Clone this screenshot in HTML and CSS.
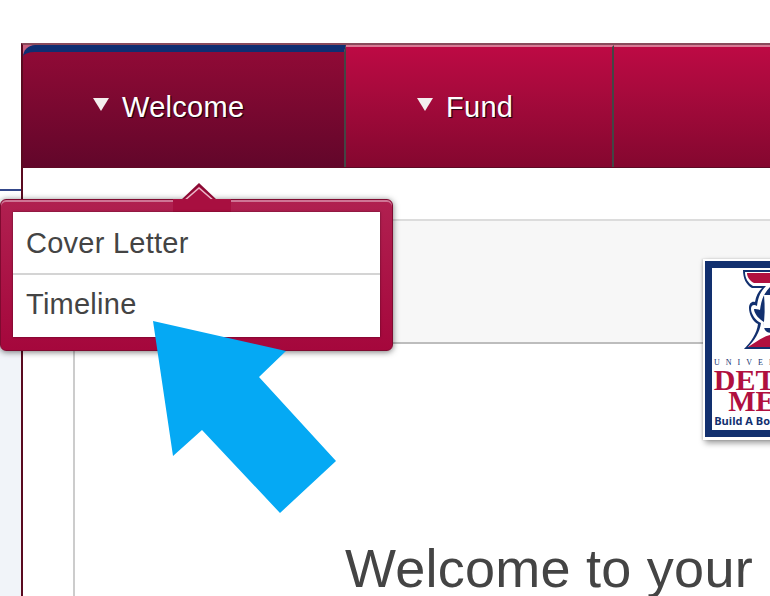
FILE: index.html
```html
<!DOCTYPE html>
<html lang="en">
<head>
  <meta charset="UTF-8" />
  <title>Welcome</title>
  <link rel="stylesheet" href="styles.css">
</head>
<body>

<div class="page">
  <div class="side"></div>

  <div class="frame">
    <nav class="tabs">
      <a class="tab active" style="width: 323px"><span class="caret"></span>Welcome</a>
      <a class="tab" style="width: 268px"><span class="caret"></span>Fund</a>
      <a class="tab tab-last"></a>
    </nav>

    <div class="content">
      <div class="panel">
        <div class="band"></div>
        <h1 class="title">Welcome to your account</h1>
      </div>
    </div>
  </div>
</div>

<div class="menu">
  <svg class="menu-notch" width="60" height="30" viewBox="0 0 60 30">
    <polygon points="9,17 27,0 45,17" fill="#8a0a33"/>
    <polygon points="11,17 27,3 43,17" fill="#a80f40"/>
    <polyline points="12,18 27,5 42,18" fill="none" stroke="#eab9c9" stroke-width="1.5"/>
    <rect x="1" y="16" width="58" height="13" fill="#a80f40"/>
  </svg>
  <ul class="menu-list">
    <li>Cover Letter</li>
    <li>Timeline</li>
  </ul>
</div>

<div class="logo">
  <div class="logo-inner">
    <svg class="logo-d" width="120" height="82" viewBox="0 0 120 82">
      <g transform="translate(-32 -2)">
        <path d="M33 2H150V81H34C41 74 47 65 48 56C43 54 39 46 39 40C39 35 42 33 45 34C46 28 48 24 52 20H42C36 17 33 10 33 2Z" fill="#12306f"/>
        <path d="M35 4H150V79H38C44 73 50 64 51 55C46 53 41 46 41 41C41 37 44 36 47 38C48 30 50 24 56 18H43C38 15 35 10 35 4Z" fill="#fff"/>
        <path d="M37 5H150V15H44C40 13 37 9 37 5Z" fill="#b0103f"/>
        <path d="M60 19H150V65H62C56 65 53 62 54 54C50 52 44 46 44 41C46 41 48 41 50 42C51 34 53 26 60 19Z" fill="#12306f"/>
        <path d="M54 27H70V60H53C55 50 55 38 54 27Z" fill="#fff"/>
        <path d="M38 79C46 74 52 69 60 67H150V79Z" fill="#b0103f"/>
      </g>
    </svg>
    <div class="logo-uni">UNIVERSITY OF</div>
    <div class="logo-name">DETROIT</div>
    <div class="logo-name logo-name-2">MERCY</div>
    <div class="logo-tag">Build A Boundless Future</div>
  </div>
</div>

<svg class="pointer" width="340" height="200" viewBox="0 0 340 200">
  <polygon points="153,1 286,31 259,57 336,141 280,193 202,110 173,136" fill="#05a9f4"/>
</svg>

</body>
</html>
```

FILE: styles.css
```css
html, body {
  margin: 0;
  height: 596px;
  overflow: hidden;
  background: #fff;
  font-family: "Liberation Sans", Arial, sans-serif;
}

.page {
  display: flex;
  height: 596px;
}

.side {
  width: 21px;
  flex: none;
  margin-top: 189px;
  border-top: 2px solid #34478a;
  background: linear-gradient(#fff, #f1f4f9 30%);
}

.frame {
  flex: 1;
  min-width: 0;
  margin-top: 43px;
  border-top: 2px solid #8a4a5c;
  border-left: 2px solid #5a0a20;
}

/* tabs */
.tabs {
  display: flex;
  height: 123px;
  box-sizing: border-box;
  border-bottom: 1px solid #5e0a25;
  background: #c96080;
}

.tab {
  display: flex;
  align-items: center;
  box-sizing: border-box;
  padding-left: 71px;
  border-top: 2px solid #d87a96;
  border-right: 2px solid #444;
  background: linear-gradient(#bd0a44, #a90a3d 35%, #84072f);
  color: #fff;
  font-size: 29px;
  letter-spacing: 0.3px;
  text-shadow: 1px 1px 1px #2a0210, 1px 1px 0 #2a0210;
}

.tab.active {
  padding-left: 70px;
  padding-bottom: 5px;
  border-top: 7px solid #0f2e72;
  border-top-left-radius: 12px;
  background: linear-gradient(#900a36, #62062a);
}

.tab-last {
  flex: 1;
  border-right: 0;
}

.caret {
  width: 0;
  height: 0;
  margin: 0 13px 6px 0;
  border-left: 8px solid transparent;
  border-right: 8px solid transparent;
  border-top: 13px solid #f4eeee;
}

/* page body */
.content {
  padding: 51px 0 0 50px;
}

.panel {
  border-left: 2px solid #ccc;
}

.band {
  height: 121px;
  border-top: 2px solid #dcdcdc;
  border-bottom: 2px solid #bdbdbd;
  background: #f7f7f7;
}

.title {
  margin: 194px 0 0 270px;
  color: #444;
  font-size: 54px;
  font-weight: normal;
  letter-spacing: 0.25px;
  line-height: 60px;
  white-space: nowrap;
}

/* popup under the Welcome tab */
.menu {
  position: absolute;
  left: 0;
  top: 199px;
  width: 367px;
  padding: 12px 12px 13px;
  border: 1px solid #7f0a30;
  border-radius: 6px;
  background: linear-gradient(#b02050, #a5073c);
  box-shadow: inset 0 2px 0 #cf7595, 0 1px 6px rgba(0, 0, 0, 0.55);
}

.menu-notch {
  position: absolute;
  left: 171px;
  top: -17px;
}

.menu-list {
  position: relative;
  margin: 0;
  padding: 0;
  list-style: none;
  background: #fff;
  color: #444;
  font-size: 29px;
  letter-spacing: 0.25px;
  box-shadow: 0 0 2px rgba(0, 0, 0, 0.5);
}

.menu-list li {
  height: 61px;
  padding-left: 13px;
  line-height: 63px;
}

.menu-list li + li {
  height: 64px;
  border-top: 2px solid #d4d4d4;
  box-sizing: border-box;
  line-height: 58px;
}

/* logo card */
.logo {
  position: absolute;
  left: 703px;
  top: 259px;
  width: 160px;
  height: 181px;
  box-sizing: border-box;
  padding: 2px 2px 3px;
  background: #fff;
  box-shadow: -1px 0 2px rgba(0, 0, 0, 0.15), 2px 3px 6px rgba(0, 0, 0, 0.4);
}

.logo-inner {
  height: 100%;
  box-sizing: border-box;
  padding-top: 2px;
  border: 7px solid #12306f;
  background: #fff;
  color: #b0103f;
  font-family: "Liberation Serif", serif;
  text-align: center;
  overflow: hidden;
}

.logo-d {
  display: block;
  margin-left: 30px;
}

.logo-uni {
  margin: 6px 0 1px;
  color: #12306f;
  font-size: 8px;
  line-height: 9px;
  letter-spacing: 6px;
  white-space: nowrap;
}

.logo-name {
  font-size: 30px;
  font-weight: bold;
  line-height: 23px;
  white-space: nowrap;
}

.logo-name-2 {
  font-size: 29px;
  line-height: 21px;
}

.logo-tag {
  margin-top: 1px;
  color: #12306f;
  font-family: "Open Sans", sans-serif;
  font-size: 11px;
  font-weight: bold;
  white-space: nowrap;
}

.pointer {
  position: absolute;
  left: 0;
  top: 320px;
}
```
